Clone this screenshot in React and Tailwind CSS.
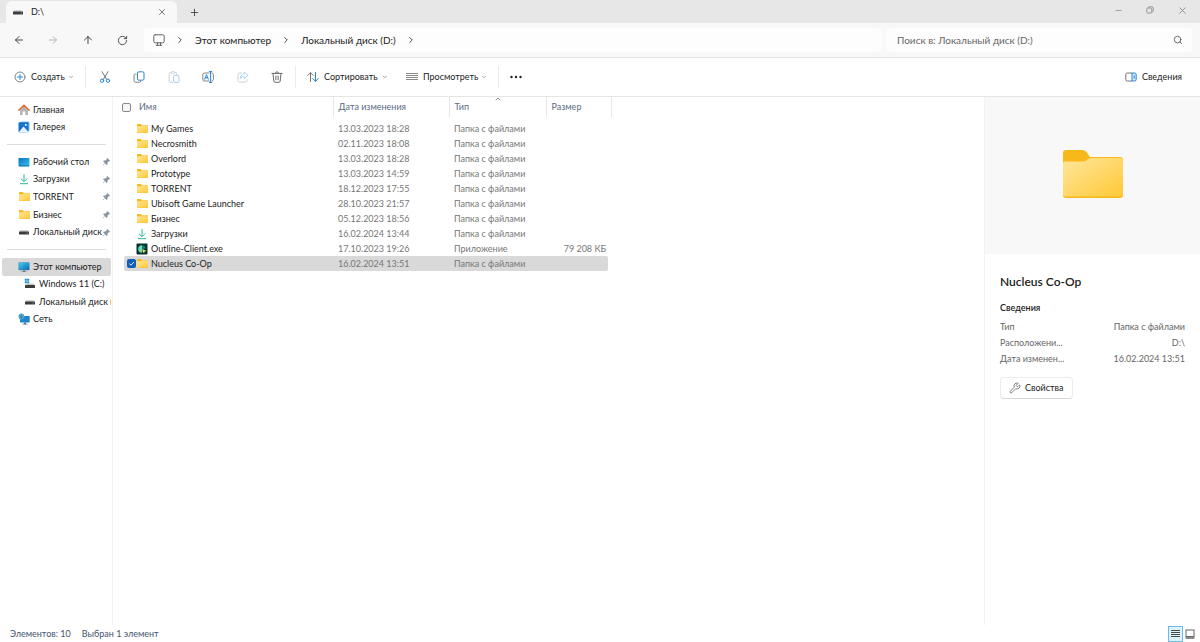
import React, { useState } from "react";
import {
  ArrowLeft,
  ArrowRight,
  ArrowUp,
  ChevronDown,
  ChevronRight,
  ChevronUp,
  Minus,
  Plus,
  RotateCw,
  Search,
  Wrench,
  X,
} from "lucide-react";

/* ---------- Icons ---------- */

const FolderIcon = ({ className = "w-[11px] h-[9px]" }) => (
  <svg viewBox="0 0 60 48" preserveAspectRatio="none" className={`shrink-0 ${className}`} aria-hidden="true">
    <defs>
      <linearGradient id="folderFront" x1="0" y1="0" x2="1" y2="1">
        <stop offset="0" stopColor="#ffe69c" />
        <stop offset="1" stopColor="#ffc937" />
      </linearGradient>
    </defs>
    <path d="M0 3a3 3 0 0 1 3-3h16q3 0 4.500 2l3.500 5h30a3 3 0 0 1 3 3v35a3 3 0 0 1-3 3H3a3 3 0 0 1-3-3z" fill="#f9b81a" />
    <path d="M0 13.500a2 2 0 0 1 2-2h18q2.500 0 4-1.500L27 8h31a2 2 0 0 1 2 2v34a2.500 2.500 0 0 1-2.500 2.500h-55A2.500 2.500 0 0 1 0 44z" fill="url(#folderFront)" />
  </svg>
);

const DriveIcon = () => (
  <svg viewBox="0 0 12 12" className="size-3 shrink-0" aria-hidden="true">
    <path d="M2.500 4h7l1.500 2H1z" fill="#d3d3d3" />
    <rect x="1" y="5.500" width="10" height="3" rx=".6" fill="#3b3b3b" />
    <rect x="8.500" y="6.500" width="1.500" height="1" fill="#6d8f80" />
  </svg>
);

const WindowsDriveIcon = () => (
  <svg viewBox="0 0 12 12" className="size-3 shrink-0" aria-hidden="true">
    <path d="M2.500 5.500h7l1.500 2H1z" fill="#c4c4c4" />
    <rect x="1" y="7" width="10" height="3" rx=".6" fill="#3b3b3b" />
    <path d="M.8.800h2v2h-2zM3.200.800h2v2h-2zM.8 3.200h2v2h-2zM3.200 3.200h2v2h-2z" fill="#1b8ad8" />
  </svg>
);

const HomeIcon = () => (
  <svg viewBox="0 0 12 12" className="size-3 shrink-0" aria-hidden="true">
    <path d="M2 5.500 6 2l4 3.500V11H7.300V7.500H4.700V11H2z" fill="#b5b8bb" />
    <path d="M.8 6.300 6 1.300l5.200 5" fill="none" stroke="#dd6b2c" strokeWidth="1.500" strokeLinecap="round" strokeLinejoin="round" />
  </svg>
);

const GalleryIcon = () => (
  <svg viewBox="0 0 12 12" className="size-3 shrink-0" aria-hidden="true">
    <rect x="2.500" y=".5" width="9" height="9.500" rx="1" fill="#7cc4f5" />
    <rect x=".5" y="1.200" width="10" height="10" rx="1" fill="#1473cf" />
    <path d="m1 11 4.500-5.500L10.500 11z" fill="#e8f4ff" />
    <circle cx="7.800" cy="4" r="1" fill="#fff" />
  </svg>
);

const DesktopIcon = () => (
  <svg viewBox="0 0 12 12" className="size-3 shrink-0" aria-hidden="true">
    <defs>
      <linearGradient id="desktopFill" x1="0" y1="0" x2="1" y2="1">
        <stop offset="0" stopColor="#0b6fc4" />
        <stop offset="1" stopColor="#35c8ea" />
      </linearGradient>
    </defs>
    <rect x=".5" y="2" width="11" height="8.500" rx=".8" fill="url(#desktopFill)" />
    <path d="M1 9.800h10" stroke="#0b6a9f" strokeWidth=".8" />
  </svg>
);

const ComputerIcon = () => (
  <svg viewBox="0 0 12 12" className="size-3 shrink-0" aria-hidden="true">
    <defs>
      <linearGradient id="screenFill" x1="0" y1="0" x2="1" y2="1">
        <stop offset="0" stopColor="#3fd0ef" />
        <stop offset="1" stopColor="#0c67b8" />
      </linearGradient>
    </defs>
    <rect x=".7" y="1.500" width="10.600" height="7.500" rx=".5" fill="url(#screenFill)" stroke="#4b7f9d" strokeWidth=".4" />
    <path d="M5 9h2v1.300h1.500v.7h-5v-.7H5z" fill="#7b8790" />
  </svg>
);

const NetworkIcon = () => (
  <svg viewBox="0 0 12 12" className="size-3 shrink-0" aria-hidden="true">
    <rect x="2" y="3" width="9.700" height="6.500" rx=".5" fill="#1c86cd" />
    <path d="M6 9.500h2v1.200h1.500v.7h-5v-.7H6z" fill="#5d7280" />
    <circle cx="3.400" cy="3.600" r="3" fill="#5cb7d8" />
    <path d="M1 2.500q2 1.500 4.800 0M1 5q2-1.300 4.800 0M3.400.6v6" fill="none" stroke="#2b6f95" strokeWidth=".6" />
  </svg>
);

const DownloadIcon = () => (
  <svg viewBox="0 0 12 12" className="size-3 shrink-0" fill="none" stroke="#2fb796" aria-hidden="true">
    <path d="M6 1v7.500M2.800 5.500 6 8.700l3.200-3.200M2 10.700h8" />
  </svg>
);

const OutlineIcon = () => (
  <svg viewBox="0 0 12 12" className="size-3 shrink-0" aria-hidden="true">
    <rect x=".5" y=".5" width="11" height="11" rx="1" fill="#07332f" />
    <path d="M6 2.200a3.800 3.800 0 0 0 0 7.600z" fill="#6ed8bd" />
    <path d="M6 2.200a3.800 3.800 0 0 1 3.600 3L6 6.500z" fill="#18806e" />
    <path d="m6.500 6 4 1.900-1.800.5-.7 1.900L6.500 8.500z" fill="#e7e34a" />
  </svg>
);

const PinIcon = () => (
  <svg viewBox="0 0 12 12" className="size-[9px] shrink-0" aria-hidden="true">
    <path d="M7 1.200 10.800 5l-.9.700-.8-.1-1.700 1.800-.1 2.300-1.100.8-2.300-2.300L1.600 11l-.6-.5 2.700-2.400L1.500 5.800l.9-1 2.300-.1L6.400 3l-.1-1z" fill="#8793a0" />
  </svg>
);

const MonitorIcon = () => (
  <svg viewBox="0 0 12 12" className="size-3" fill="none" stroke="#555" strokeWidth=".9" strokeLinecap="round" aria-hidden="true">
    <rect x=".8" y=".8" width="10.400" height="8" rx="1.400" />
    <path d="M4.500 9v2M7.500 9v2M3.200 11.300h5.600" />
  </svg>
);

const NewIcon = () => (
  <svg viewBox="0 0 12 12" className="size-3" fill="none" strokeLinecap="round" aria-hidden="true">
    <circle cx="6" cy="6" r="5" stroke="#6b7680" strokeWidth=".9" />
    <path d="M6 3.500v5M3.500 6h5" stroke="#2585d8" />
  </svg>
);

const CutIcon = () => (
  <svg viewBox="0 0 12 12" className="size-3" fill="none" strokeLinecap="round" aria-hidden="true">
    <path d="m3 .7 4.800 7.800M9 .7 4.200 8.500" stroke="#666" strokeWidth=".9" />
    <circle cx="3" cy="9.700" r="1.700" stroke="#2585d8" />
    <circle cx="9" cy="9.700" r="1.700" stroke="#2585d8" />
  </svg>
);

const CopyIcon = () => (
  <svg viewBox="0 0 12 12" className="size-3" fill="none" aria-hidden="true">
    <path d="M3.500 3H2.300Q1 3 1 4.400v5.200Q1 11.300 2.700 11.300h3.600q1.200 0 1.500-1.300" stroke="#777" strokeWidth=".9" />
    <rect x="4.500" y=".8" width="6.500" height="8.400" rx="1.400" stroke="#2585d8" />
  </svg>
);

const PasteIcon = () => (
  <svg viewBox="0 0 12 12" className="size-3" fill="none" aria-hidden="true">
    <path d="M3.500 1.500H2.300Q1.200 1.500 1.200 2.600v7.600q0 1.100 1.100 1.100H5M6.500 1.500h1.200q1.100 0 1.100 1.100V4" stroke="#c9c9c9" strokeWidth=".9" />
    <rect x="3.400" y=".6" width="3.200" height="1.800" rx=".8" stroke="#c9c9c9" strokeWidth=".8" />
    <rect x="5.600" y="4.400" width="5.400" height="7" rx="1.100" stroke="#a6cfef" />
  </svg>
);

const RenameIcon = () => (
  <svg viewBox="0 0 12 12" className="size-3" fill="none" strokeLinecap="round" aria-hidden="true">
    <path d="M7 2H2.500Q.8 2 .8 3.700v4.600Q.8 10 2.500 10H7M10 2q1.400.2 1.400 1.700v4.600Q11.400 9.800 10 10" stroke="#777" strokeWidth=".9" />
    <path d="m2.700 8.200 1.800-4.600 1.800 4.600M3.300 6.800h2.400M8.600.8v10.400M7.400.6h2.400M7.400 11.400h2.400" stroke="#2585d8" />
  </svg>
);

const ShareIcon = () => (
  <svg viewBox="0 0 12 12" className="size-3" fill="none" strokeLinejoin="round" aria-hidden="true">
    <path d="M5 2H2.700Q1 2 1 3.700v5.600Q1 11 2.700 11h5.600Q10 11 10 9.300V8.500" stroke="#c9c9c9" strokeWidth=".9" />
    <path d="M7.300 1v2Q4 3.200 3.200 7.500 4.800 5.700 7.300 5.700v2L11 4.300z" stroke="#a6cfef" strokeWidth=".9" />
  </svg>
);

const DeleteIcon = () => (
  <svg viewBox="0 0 12 12" className="size-3" fill="none" stroke="#5c5c5c" strokeWidth=".9" strokeLinecap="round" aria-hidden="true">
    <path d="M.9 2.400h10.200M4.400 2.200Q4.600.8 6 .8t1.600 1.400M2 2.600l.8 7.400q.1 1.300 1.400 1.300h3.600q1.300 0 1.400-1.300L10 2.600M4.900 5v3.800M7.100 5v3.800" />
  </svg>
);

const SortIcon = () => (
  <svg viewBox="0 0 12 12" className="size-3" fill="none" strokeLinecap="round" strokeLinejoin="round" aria-hidden="true">
    <path d="M3.500 10.500V1.800M.8 4.400l2.700-2.700 2.700 2.700" stroke="#666" strokeWidth=".9" />
    <path d="M8.500 1.500v8.700M5.800 7.600l2.700 2.700 2.700-2.700" stroke="#2585d8" />
  </svg>
);

const LinesIcon = () => (
  <svg viewBox="0 0 12 10" className="h-[10px] w-3" stroke="#888" aria-hidden="true">
    <path d="M0 1.500h12M0 3.500h12M0 5.500h12M0 7.500h12" />
  </svg>
);

const MoreIcon = () => (
  <svg viewBox="0 0 12 4" className="h-1 w-3" fill="#222" aria-hidden="true">
    <circle cx="1.500" cy="2" r="1.200" />
    <circle cx="6" cy="2" r="1.200" />
    <circle cx="10.500" cy="2" r="1.200" />
  </svg>
);

const DetailsPaneIcon = () => (
  <svg viewBox="0 0 12 12" className="size-3" fill="none" aria-hidden="true">
    <path d="M7 2H2.400Q.8 2 .8 3.500v5Q.8 10 2.400 10H7" stroke="#666" strokeWidth=".9" />
    <path d="M7 2h2.600q1.600 0 1.600 1.500v5q0 1.500-1.600 1.500H7z" fill="#d5ebfb" stroke="#2585d8" />
    <path d="M9.200 4.200v3.600" stroke="#2585d8" strokeWidth=".9" />
  </svg>
);

const RestoreIcon = () => (
  <svg viewBox="0 0 8 8" className="size-2" fill="none" stroke="currentColor" strokeWidth=".9" aria-hidden="true">
    <rect x=".8" y="2" width="5" height="5" rx="1" />
    <path d="M2.200 1.800Q2.400.7 3.500.7h2Q7.300.7 7.300 2.500v2q0 1.100-1.200 1.300" />
  </svg>
);

/* ---------- Data ---------- */

const quickItems = [
  { label: "Рабочий стол", icon: <DesktopIcon /> },
  { label: "Загрузки", icon: <DownloadIcon /> },
  { label: "TORRENT", icon: <FolderIcon /> },
  { label: "Бизнес", icon: <FolderIcon /> },
  { label: "Локальный диск", icon: <DriveIcon /> },
];

const files = [
  { name: "My Games", date: "13.03.2023 18:28" },
  { name: "Necrosmith", date: "02.11.2023 18:08" },
  { name: "Overlord", date: "13.03.2023 18:28" },
  { name: "Prototype", date: "13.03.2023 14:59" },
  { name: "TORRENT", date: "18.12.2023 17:55" },
  { name: "Ubisoft Game Launcher", date: "28.10.2023 21:57" },
  { name: "Бизнес", date: "05.12.2023 18:56" },
  { name: "Загрузки", date: "16.02.2024 13:44", icon: <DownloadIcon /> },
  { name: "Outline-Client.exe", date: "17.10.2023 19:26", type: "Приложение", size: "79 208 КБ", icon: <OutlineIcon /> },
  { name: "Nucleus Co-Op", date: "16.02.2024 13:51" },
];

const details = [
  ["Тип", "Папка с файлами"],
  ["Расположени...", "D:\\"],
  ["Дата изменен...", "16.02.2024 13:51"],
];

/* ---------- Parts ---------- */

const IconButton = ({ label, className = "", children, ...rest }) => (
  <button aria-label={label} title={label} className={`flex items-center justify-center ${className}`} {...rest}>
    {children}
  </button>
);

const SideLink = ({ icon, label, pinned, active, nested }) => (
  <li className="flex-1">
    <a
      href="#"
      className={`flex h-full items-center ${nested ? "pl-[22px]" : "pl-4"} ${active ? "rounded-[2px] bg-[#d9d9d9]" : ""}`}
    >
      <span className="mr-[3px] flex w-3 shrink-0 justify-center">{icon}</span>
      <span className={`min-w-0 flex-1 whitespace-nowrap ${nested ? "overflow-hidden" : ""}`}>{label}</span>
      {pinned && <PinIcon />}
    </a>
  </li>
);

const TitleBar = () => (
  <header className="flex h-[23px] items-end bg-[#e7e7e7] pl-[6px]">
    <div className="flex h-[22px] w-[171px] items-center rounded-t-md bg-[#f8f8f8] pl-[6px] pr-[10px]">
      <DriveIcon />
      <span className="ml-[7px] flex-1">D:\</span>
      <IconButton label="Закрыть вкладку">
        <X size={10} strokeWidth={1.8} className="text-[#555]" />
      </IconButton>
    </div>
    <IconButton label="Новая вкладка" className="ml-2 h-[22px] w-[18px] text-[#444]">
      <Plus size={11} strokeWidth={2} />
    </IconButton>
    <div className="ml-auto flex h-[23px] items-center pr-[2px] pb-[3px] text-[#8c8c8c]">
      <IconButton label="Свернуть" className="w-8">
        <Minus size={9} strokeWidth={2} />
      </IconButton>
      <IconButton label="Восстановить" className="w-8">
        <RestoreIcon />
      </IconButton>
      <IconButton label="Закрыть" className="w-8">
        <X size={11} strokeWidth={2} />
      </IconButton>
    </div>
  </header>
);

const NavBar = () => (
  <nav className="flex h-[35px] items-center border-b border-[#e5e5e5] bg-[#f8f8f8] pr-2 text-[10px]">
    <div className="flex w-36 pl-px text-[#444]">
      <IconButton label="Назад" className="w-[35px]">
        <ArrowLeft size={12} strokeWidth={2} />
      </IconButton>
      <IconButton label="Вперёд" className="w-[34px] text-[#b5b5b5]">
        <ArrowRight size={12} strokeWidth={2} />
      </IconButton>
      <IconButton label="Вверх" className="w-[35px]">
        <ArrowUp size={12} strokeWidth={2} />
      </IconButton>
      <IconButton label="Обновить" className="w-[34px]">
        <RotateCw size={11} strokeWidth={2} />
      </IconButton>
    </div>
    <div className="flex h-6 flex-1 items-center rounded bg-[#fdfdfd] pl-[9px] text-[#222]">
      <MonitorIcon />
      <ChevronRight size={10} className="mx-[10px]" />
      <button>Этот компьютер</button>
      <ChevronRight size={10} className="mx-[10px]" />
      <button>Локальный диск (D:)</button>
      <ChevronRight size={10} className="mx-[10px]" />
    </div>
    <label className="ml-1 flex h-6 w-[306px] items-center rounded bg-[#fdfdfd] pl-[11px] pr-[9px]">
      <input
        type="text"
        aria-label="Поиск"
        placeholder="Поиск в: Локальный диск (D:)"
        className="min-w-0 flex-1 bg-transparent outline-none placeholder:text-[#666]"
      />
      <Search size={10} strokeWidth={2} className="text-[#555]" />
    </label>
  </nav>
);

const Divider = () => <span className="h-[22px] w-px bg-[#ececec]" />;

const ToolBar = () => (
  <div className="flex h-[39px] items-center border-b border-[#e5e5e5] bg-white px-[14px] text-[#222]">
    <button className="flex w-[71px] items-center gap-1">
      <NewIcon />
      <span className="ml-px">Создать</span>
      <ChevronDown size={6} strokeWidth={2.5} className="-ml-px text-[#777]" />
    </button>
    <Divider />
    <div className="flex flex-1 items-center">
      <div className="flex w-[209px] pl-[2px]">
        <IconButton label="Вырезать" className="w-[34px]"><CutIcon /></IconButton>
        <IconButton label="Копировать" className="w-[34px]"><CopyIcon /></IconButton>
        <IconButton label="Вставить" className="w-[35px]"><PasteIcon /></IconButton>
        <IconButton label="Переименовать" className="w-[34px]"><RenameIcon /></IconButton>
        <IconButton label="Поделиться" className="w-[35px]"><ShareIcon /></IconButton>
        <IconButton label="Удалить" className="w-[34px]"><DeleteIcon /></IconButton>
      </div>
      <Divider />
      <button className="ml-[11px] flex w-[99px] items-center gap-1">
        <SortIcon />
        <span className="ml-px">Сортировать</span>
        <ChevronDown size={6} strokeWidth={2.5} className="text-[#777]" />
      </button>
      <button className="flex w-[92px] items-center gap-1">
        <LinesIcon />
        <span className="ml-px">Просмотреть</span>
        <ChevronDown size={6} strokeWidth={2.5} className="-ml-px text-[#777]" />
      </button>
      <Divider />
      <IconButton label="Дополнительно" className="ml-[11px]">
        <MoreIcon />
      </IconButton>
    </div>
    <button className="flex items-center gap-[5px] pr-1">
      <DetailsPaneIcon />
      Сведения
    </button>
  </div>
);

const SideBar = () => (
  <aside className="w-[113px] shrink-0 border-r border-[#f2f2f2] pl-[2px] pr-px pt-1">
    <ul className="flex h-[35px] flex-col">
      <SideLink icon={<HomeIcon />} label="Главная" />
      <SideLink icon={<GalleryIcon />} label="Галерея" />
    </ul>
    <hr className="mx-[5px] my-2 border-[#dcdcdc]" />
    <ul className="flex h-[88px] flex-col">
      {quickItems.map((item) => (
        <SideLink key={item.label} {...item} pinned />
      ))}
    </ul>
    <hr className="mx-[5px] my-2 border-[#dcdcdc]" />
    <ul className="flex h-[70px] flex-col">
      <SideLink icon={<ComputerIcon />} label="Этот компьютер" active />
      <SideLink icon={<WindowsDriveIcon />} label="Windows 11 (C:)" nested />
      <SideLink icon={<DriveIcon />} label="Локальный диск (D:)" nested />
      <SideLink icon={<NetworkIcon />} label="Сеть" />
    </ul>
  </aside>
);

const FileTable = ({ selected, onSelect }) => (
  <main className="min-w-0 flex-1 pl-[11px]">
    <table className="w-[487px] table-fixed border-collapse text-left">
      <colgroup>
        <col className="w-[209px]" />
        <col className="w-[116px]" />
        <col className="w-[97px]" />
        <col className="w-[62px]" />
        <col className="w-[3px]" />
      </colgroup>
      <thead>
        <tr className="h-5 text-[#5b6b86]">
          <th className="border-r border-[#e8e8e8] p-0 font-normal">
            <div className="flex items-center">
              <input
                type="checkbox"
                aria-label="Выбрать все"
                className="-ml-[2px] size-[9px] appearance-none rounded-[2px] border border-[#888] bg-[#f6f6f6]"
              />
              <button className="ml-2">Имя</button>
            </div>
          </th>
          <th className="border-r border-[#e8e8e8] p-0 pl-[5px] font-normal"><button>Дата изменения</button></th>
          <th className="relative border-r border-[#e8e8e8] p-0 pl-[5px] font-normal">
            <ChevronUp size={8} strokeWidth={2} className="absolute left-1/2 -top-[2px] -translate-x-1/2 text-[#555]" />
            <button>Тип</button>
          </th>
          <th className="p-0 pl-[5px] font-normal"><button>Размер</button></th>
          <td className="border-r border-[#e8e8e8] p-0" />
        </tr>
      </thead>
      <tbody className="before:block before:h-1 before:content-['']">
        {files.map((file) => {
          const active = file.name === selected;
          const cell = `p-0 ${active ? "bg-[#d9d9d9]" : ""}`;
          return (
            <tr key={file.name} className="h-[15px] leading-[15px] text-[#777]" onClick={() => onSelect(file.name)}>
              <td className={`${cell} rounded-l-[2px] text-[#222]`}>
                <div className="flex items-center">
                  <span className="flex w-3 shrink-0 pl-[3px]">
                    {active && (
                      <span className="relative flex">
                        <input
                          type="checkbox"
                          aria-label={file.name}
                          checked
                          readOnly
                          className="size-[9px] appearance-none rounded-[2px] bg-[#0f5fb8]"
                        />
                        <svg viewBox="0 0 8 8" className="pointer-events-none absolute inset-0 size-[9px]" fill="none" stroke="#fff" strokeWidth=".8">
                          <path d="m2 4 1.500 1.500L6.200 2.700" />
                        </svg>
                      </span>
                    )}
                  </span>
                  <span className="mr-[3px] flex w-3 shrink-0 justify-center">{file.icon || <FolderIcon />}</span>
                  {file.name}
                </div>
              </td>
              <td className={`${cell} pl-[5px]`}>{file.date}</td>
              <td className={`${cell} pl-[5px]`}>{file.type || "Папка с файлами"}</td>
              <td className={`${cell} rounded-r-[2px] pr-[2px] text-right whitespace-nowrap`}>{file.size}</td>
            </tr>
          );
        })}
      </tbody>
    </table>
  </main>
);

const DetailsPane = ({ name }) => (
  <aside className="w-[216px] shrink-0 border-l border-[#f2f2f2]">
    <div className="flex h-[157px] items-center justify-center bg-[#f8f8f8] pb-[3px]">
      <FolderIcon className="h-12 w-[60px]" />
    </div>
    <div className="px-[15px] pt-5 text-[#666]">
      <h2 className="text-xs leading-4 font-semibold text-[#222]">{name}</h2>
      <h3 className="mt-[10px] mb-[3px] leading-4 font-semibold text-[#222]">Сведения</h3>
      <dl>
        {details.map(([label, value]) => (
          <div key={label} className="flex justify-between leading-4">
            <dt className="whitespace-nowrap">{label}</dt>
            <dd>{value}</dd>
          </div>
        ))}
      </dl>
      <button className="mt-[10px] flex h-[22px] items-center gap-1 rounded border border-[#ececec] border-b-[#d8d8d8] bg-white px-2 text-[#222]">
        <Wrench size={12} strokeWidth={1.5} className="-scale-x-100 rotate-90 text-[#555]" />
        Свойства
      </button>
    </div>
  </aside>
);

const StatusBar = () => (
  <footer className="flex h-[17px] items-center pl-[10px] pr-1 text-[#44546e]">
    <span>Элементов: 10</span>
    <span className="ml-[11px]">Выбран 1 элемент</span>
    <div className="ml-auto flex items-center">
      <IconButton label="Таблица" className="h-4 w-[15px] border border-[#66bdeb] bg-[#dff1fb]">
        <svg viewBox="0 0 9 10" className="h-[10px] w-[9px]" stroke="#333">
          <path d="M0 1.500h9M0 3.500h9M0 5.500h9M0 7.500h9" strokeWidth=".9" />
        </svg>
      </IconButton>
      <IconButton label="Крупные значки" className="h-4 w-[13px]">
        <svg viewBox="0 0 10 10" className="size-[10px]" fill="none" stroke="#666">
          <rect x="1" y="1" width="8" height="6.500" />
          <path d="M.5 9h9" strokeWidth="1.500" />
        </svg>
      </IconButton>
    </div>
  </footer>
);

export default function App() {
  const [selected, setSelected] = useState("Nucleus Co-Op");

  return (
    <div className="flex min-h-screen flex-col bg-white font-['Lato','Open_Sans',sans-serif] text-[9px] leading-3 text-[#222]">
      <TitleBar />
      <NavBar />
      <ToolBar />
      <div className="flex flex-1">
        <SideBar />
        <FileTable selected={selected} onSelect={setSelected} />
        <DetailsPane name={selected} />
      </div>
      <StatusBar />
    </div>
  );
}
